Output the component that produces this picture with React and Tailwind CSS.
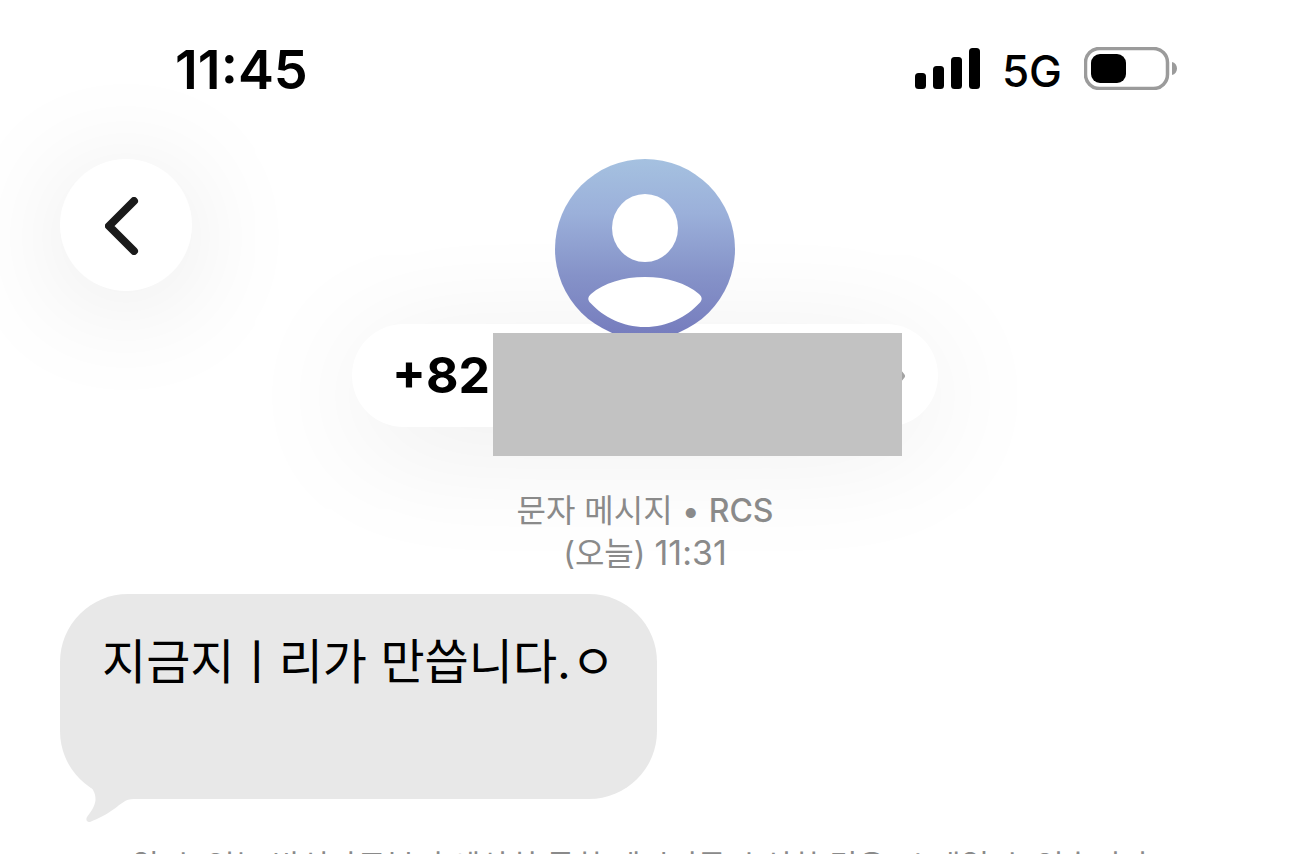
import { useState } from 'react';

const SIGNAL_BARS = [
    { x: 0, y: 25, height: 16 },
    { x: 18, y: 18, height: 23 },
    { x: 36, y: 9, height: 32 },
    { x: 54, y: 0, height: 41 },
];

const messages = [
    { id: 1, text: '지금지ㅣ리가 만씁니다.ㅇ' },
];

const SignalIcon = () => (
    <svg width="65" height="41" viewBox="0 0 65 41" aria-hidden="true">
        {SIGNAL_BARS.map((bar) => (
            <rect key={bar.x} x={bar.x} y={bar.y} width="11" height={bar.height} rx="3.5" />
        ))}
    </svg>
);

const BatteryIcon = () => (
    <svg width="93" height="43" viewBox="0 0 93 43" aria-hidden="true">
        <rect x="1.5" y="1.5" width="82" height="40" rx="14" fill="none" stroke="#9b9b9b" strokeWidth="3.5" />
        <rect x="7" y="7" width="35" height="29" rx="9" />
        <path d="M88 15c3 .7 5 3.300 5 6.500s-2 5.800-5 6.500z" fill="#9b9b9b" />
    </svg>
);

const Avatar = () => (
    <svg className="relative z-10" width="180" height="180" viewBox="0 0 180 180" aria-hidden="true">
        <defs>
            <linearGradient id="avatarFill" x1="0" y1="0" x2="0" y2="1">
                <stop offset="0" stopColor="#a5c1e0" />
                <stop offset="0.3" stopColor="#9bb0da" />
                <stop offset="0.65" stopColor="#8592c8" />
                <stop offset="1" stopColor="#757bbd" />
            </linearGradient>
        </defs>
        <circle cx="90" cy="90" r="90" fill="url(#avatarFill)" />
        <ellipse cx="90" cy="69" rx="33" ry="34" fill="#fff" />
        <path
            d="M36 135C49 124 68 118 90 118s41 6 54 17c3.500 3 3.500 6 .5 9-13 14-32 24-54.500 24s-41.500-10-54.500-24c-3-3-3-6 .5-9z"
            fill="#fff"
        />
    </svg>
);

const StatusBar = () => (
    <div className="flex h-[60px] items-start justify-between pl-[175px] pr-[113px]">
        <time className="text-[54px] leading-[60px] font-semibold">11:45</time>
        <div className="flex h-14 items-center">
            <SignalIcon />
            <span className="ml-[22px] mt-1.5 text-[44px] leading-[56px] font-medium">5G</span>
            <span className="ml-[22px]">
                <BatteryIcon />
            </span>
        </div>
    </div>
);

const Bubble = ({ text }) => (
    <li className="relative min-h-[205px] w-fit rounded-[68px] bg-[#e8e8e8] px-[42px] pt-9 text-[48px] leading-[64px]">
        {text}
        {/* Tail */}
        <svg className="absolute top-[186px] left-[22px]" width="56" height="42" viewBox="0 0 56 42" aria-hidden="true">
            <path
                d="M2 0C10 6 14 13 13.500 20C13 26 9 32 5 37C3.500 40 5 42 8 42C17 38 24 35 32 29C39 24 43 19 52 19V0z"
                fill="#e8e8e8"
            />
        </svg>
    </li>
);

const App = () => {
    const [open, setOpen] = useState(true);

    return (
        <div className="h-screen overflow-hidden bg-white pt-10 font-[Inter,'Noto_Sans_CJK_KR',sans-serif] text-black">
            <StatusBar />

            {/* Contact header */}
            <header className="mt-[59px] grid grid-cols-[132px_1fr_132px] items-start px-[60px]">
                <button
                    type="button"
                    aria-label="뒤로"
                    onClick={() => setOpen(!open)}
                    className="flex size-[132px] items-center justify-center rounded-full bg-white shadow-[0_12px_120px_rgba(0,0,0,0.1)]"
                >
                    <svg className="mr-2 mt-0.5" width="34" height="58" viewBox="0 0 34 58" fill="none" aria-hidden="true">
                        <path d="M29 4L4 29L29 54" stroke="#1a1a1a" strokeWidth="8" strokeLinecap="round" strokeLinejoin="round" />
                    </svg>
                </button>
                <div className="flex flex-col items-center">
                    <Avatar />
                    <button
                        type="button"
                        className="relative -mt-[15px] flex h-[103px] w-[586px] items-center justify-between rounded-full bg-white pb-0.5 pl-10 pr-8 text-[50px] leading-[60px] font-bold shadow-[0_20px_130px_rgba(0,0,0,0.08)]"
                    >
                        +82
                        <svg className="mt-0.5" width="14" height="24" viewBox="0 0 14 24" fill="none" aria-hidden="true">
                            <path d="M2 2L10 12L2 22" stroke="#a3a3a3" strokeWidth="6" strokeLinecap="round" strokeLinejoin="round" />
                        </svg>
                    </button>
                </div>
            </header>

            {/* Number cover, sits over the name pill and the avatar */}
            <div className="relative z-20">
                <div className="absolute bottom-[-29px] left-1/2 ml-[-152px] h-[123px] w-[409px] bg-[#c2c2c2]" />
            </div>

            <div className="relative mt-[63px] text-center text-[32px] leading-[42px] text-[#8a8a8a]">
                <p>
                    문자 메시지 • <span className="font-medium">RCS</span>
                </p>
                <p className="h-[42px]">
                    (오늘) <time className="text-[34px]">11:31</time>
                </p>
            </div>

            <ul className="mt-5 pl-[60px]">
                {messages.map((message) => (
                    <Bubble key={message.id} text={message.text} />
                ))}
            </ul>

            <p className="mt-[46px] text-center text-[31px] leading-[42px] whitespace-nowrap text-[#8a8a8a]">
                알 수 없는 발신자로부터 예상치 못한 메시지를 수신한 경우, 스팸일 수 있습니다.
            </p>
        </div>
    );
};

export default App;
